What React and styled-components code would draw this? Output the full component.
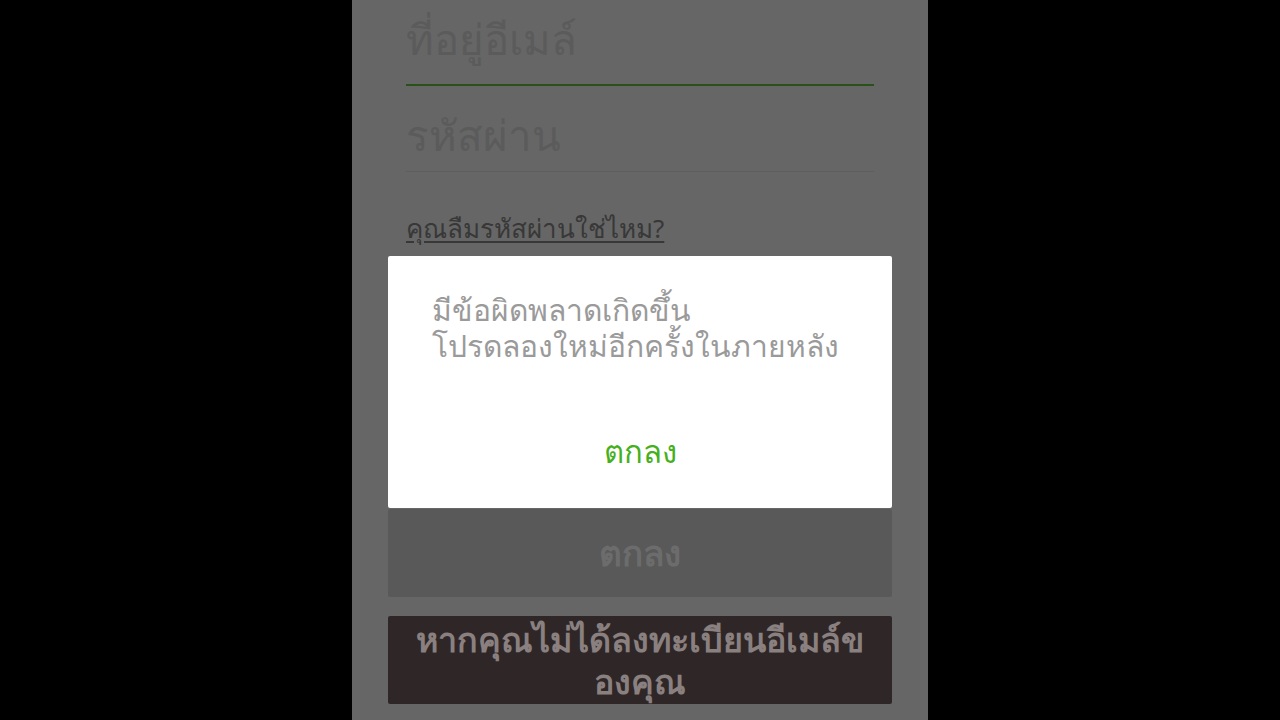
import React from 'react'
import styled, { createGlobalStyle } from 'styled-components'

const GlobalStyle = createGlobalStyle`
  html, body {
    margin: 0;
    padding: 0;
    background: #000;
    font-family: "Noto Sans", "DejaVu Sans", sans-serif;
  }
`

const Stage = styled.div`
  width: 1280px;
  height: 720px;
  background: #000;
  display: flex;
  justify-content: center;
  overflow: hidden;
`

const Phone = styled.div`
  position: relative;
  width: 576px;
  height: 720px;
  background: #666666;
  display: flex;
  flex-direction: column;
  padding: 0 36px;
  box-sizing: border-box;
  overflow: hidden;
`

const Form = styled.div`
  display: flex;
  flex-direction: column;
  padding: 0 18px;
`

const Field = styled.div`
  font-size: 42px;
  line-height: 50px;
  color: #5b5b5b;
  padding-top: ${p => p.$top}px;
  padding-bottom: ${p => p.$bottom}px;
  border-bottom: ${p => (p.$active ? '2px solid #2a5218' : '1px solid #5e5e5e')};
`

const Forgot = styled.a`
  margin-top: 40px;
  font-size: 26px;
  line-height: 32px;
  color: #383838;
  text-decoration: underline;
  text-underline-offset: 3px;
  align-self: flex-start;
`

const Button = styled.div`
  display: flex;
  align-items: center;
  justify-content: center;
  text-align: center;
  height: 88px;
  border-radius: 2px;
  font-weight: bold;
  background: ${p => p.$bg};
  color: ${p => p.$fg};
  font-size: ${p => p.$size}px;
  line-height: 42px;
  margin-top: ${p => p.$top}px;
`

const Dialog = styled.div`
  position: absolute;
  top: 256px;
  left: 36px;
  width: 504px;
  height: 252px;
  background: #fff;
  border-radius: 2px;
  box-sizing: border-box;
  padding: 36px 44px 0;
  display: flex;
  flex-direction: column;
`

const Message = styled.p`
  margin: 0;
  font-size: 30px;
  line-height: 36px;
  color: #9a9a9a;
`

const DialogAction = styled.div`
  margin-top: auto;
  height: 112px;
  display: flex;
  align-items: center;
  justify-content: center;
  font-size: 31px;
  color: #46b01c;
`

export default function App() {
  return (
    <Stage>
      <GlobalStyle />
      <Phone>
        <Form>
          <Field $top={14} $bottom={20} $active>ที่อยู่อีเมล์</Field>
          <Field $top={24} $bottom={11}>รหัสผ่าน</Field>
          <Forgot>คุณลืมรหัสผ่านใช่ไหม?</Forgot>
        </Form>
        <Button $bg="#595959" $fg="#6c6c6c" $size={35} $top={265}>ตกลง</Button>
        <Button $bg="#2f2727" $fg="#8a8080" $size={34} $top={19}>
          หากคุณไม่ได้ลงทะเบียนอีเมล์ข
          <br />
          องคุณ
        </Button>
        <Dialog>
          <Message>
            มีข้อผิดพลาดเกิดขึ้น
            <br />
            โปรดลองใหม่อีกครั้งในภายหลัง
          </Message>
          <DialogAction>ตกลง</DialogAction>
        </Dialog>
      </Phone>
    </Stage>
  )
}
